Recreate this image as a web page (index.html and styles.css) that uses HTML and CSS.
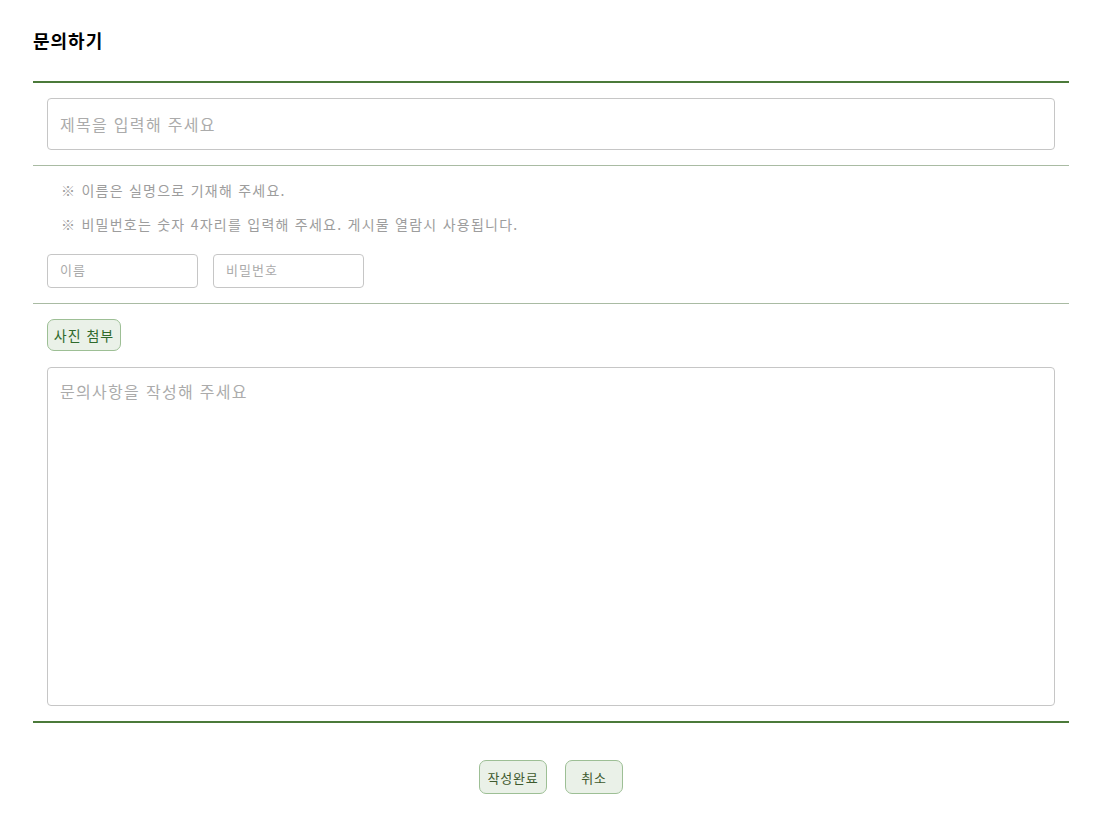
FILE: index.html
```html
<!DOCTYPE html>
<html lang="ko">
<head>
<meta charset="utf-8">
<title>문의하기</title>
<link rel="stylesheet" href="styles.css">
</head>
<body>
<div class="page">
  <h2 class="title">문의하기</h2>
  <form class="form">
    <div class="sec sec-top">
      <input class="field field-title" type="text" placeholder="제목을 입력해 주세요">
    </div>
    <div class="sec sec-info">
      <p class="note">※ 이름은 실명으로 기재해 주세요.</p>
      <p class="note">※ 비밀번호는 숫자 4자리를 입력해 주세요. 게시물 열람시 사용됩니다.</p>
      <div class="small-row">
        <input class="field field-small" type="text" placeholder="이름">
        <input class="field field-small" type="password" placeholder="비밀번호">
      </div>
    </div>
    <div class="sec sec-body">
      <button type="button" class="btn btn-photo">사진 첨부</button>
      <textarea class="field field-area" placeholder="문의사항을 작성해 주세요"></textarea>
    </div>
    <div class="actions">
      <button type="button" class="btn btn-act btn-submit">작성완료</button>
      <button type="button" class="btn btn-act btn-cancel">취소</button>
    </div>
  </form>
</div>
</body>
</html>
```

FILE: styles.css
```css
* { box-sizing: border-box; }
html, body { margin: 0; padding: 0; background: #fff; }
body {
  font-family: "Noto Sans CJK KR", "Noto Sans", sans-serif;
  color: #222;
}
.page {
  width: 1036px;
  margin-left: 33px;
  padding-top: 27px;
}
.title {
  margin: 0 0 28px;
  font-size: 18px;
  line-height: 26px;
  font-weight: 700;
  letter-spacing: 1px;
  color: #000;
}
.form { margin: 0; }
.sec {
  padding: 15px 14px;
  border-top: 1px solid #a9bba3;
}
.sec-top {
  border-top: 2px solid #4b7a3a;
}
.field {
  display: block;
  border: 1px solid #c6c6c6;
  border-radius: 4px;
  background: #fff;
  font-family: "Noto Sans CJK KR", "Noto Sans", sans-serif;
  color: #333;
  outline: none;
}
.field::placeholder { color: #ababab; }
.field-title {
  width: 100%;
  height: 52px;
  padding: 0 12px;
  font-size: 16px;
  letter-spacing: 1.3px;
}
.sec-info { padding-top: 14px; }
.note {
  margin: 0 0 14px;
  padding-left: 14px;
  font-size: 14px;
  line-height: 20px;
  letter-spacing: 1.25px;
  color: #9d9d9d;
}
.small-row {
  display: flex;
  gap: 15px;
  margin-top: 20px;
}
.field-small {
  width: 151px;
  height: 34px;
  padding: 0 12px 4px;
  font-size: 13px;
  letter-spacing: 1px;
}
.sec-body {
  display: flex;
  flex-direction: column;
  align-items: flex-start;
  gap: 16px;
}
.btn {
  font-family: "Noto Sans CJK KR", "Noto Sans", sans-serif;
  background: #eaf1e8;
  border: 1px solid #9dbf95;
  border-radius: 7px;
  cursor: pointer;
  padding: 0;
}
.btn-photo {
  width: 74px;
  height: 32px;
  font-size: 14px;
  letter-spacing: 1px;
  color: #2f6a2c;
}
.field-area {
  width: 100%;
  height: 339px;
  padding: 12px 12px;
  font-size: 16px;
  line-height: 22px;
  letter-spacing: 1.3px;
  resize: none;
}
.actions {
  border-top: 2px solid #4b7a3a;
  display: flex;
  justify-content: center;
  gap: 18px;
  padding-top: 37px;
}
.btn-act {
  height: 34px;
  font-size: 13px;
  letter-spacing: 0.8px;
  color: #3e5a2e;
}
.btn-submit { width: 68px; }
.btn-cancel { width: 58px; }
```
